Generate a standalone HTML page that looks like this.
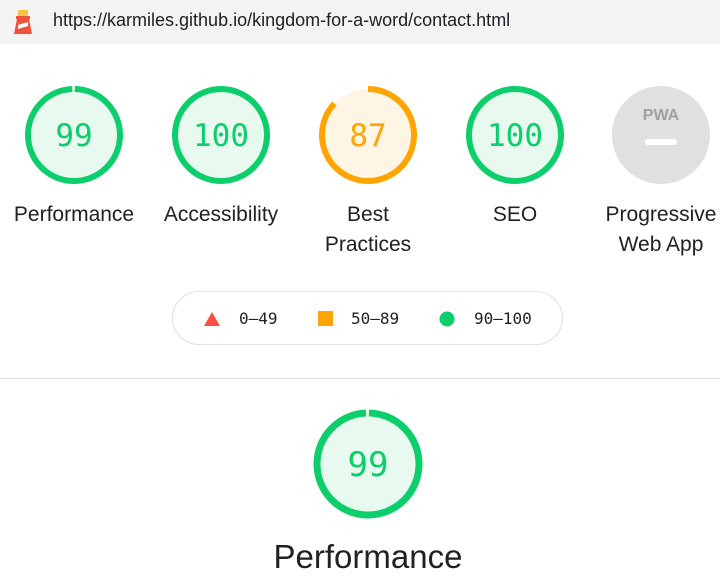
<!DOCTYPE html><html><head><style>
body{margin:0;width:720px;height:581px;background:#fff;position:relative;overflow:hidden;font-family:"Liberation Sans",sans-serif}
.bar{position:absolute;left:0;top:0;width:720px;height:44px;background:#f3f3f3}
.url{position:absolute;left:53px;top:10px;font-size:18px;color:#202124}
.lbl{position:absolute;width:160px;text-align:center;font-size:21px;color:#212121;line-height:30px;top:200px}
.mono{font-family:"DejaVu Sans Mono","Liberation Mono",monospace}
.leg{position:absolute;left:172px;top:291px;width:391px;height:54px;border:1px solid #e0e0e0;border-radius:28px;box-sizing:border-box}
.lt{position:absolute;top:309px;font-size:16px;color:#212121}
</style></head><body>
<div class="bar"></div>
<svg style="position:absolute;left:12px;top:8px" width="22" height="28" viewBox="0 0 22 28"><rect x="6" y="2" width="10" height="6" fill="#f3c34b"/><path d="M4 8h14v3H4z" fill="#f0533a"/><path d="M5 11h12l3 15H2z" fill="#f0533a"/><path d="M6 17l10-3v4l-10 3z" fill="#fff"/></svg>
<div class="url">https://karmiles.github.io/kingdom-for-a-word/contact.html</div>
<svg style="position:absolute;left:0;top:0" width="720" height="581">
<g font-family="DejaVu Sans Mono,Liberation Mono,monospace" font-size="31" text-anchor="middle">
<circle cx="74" cy="135" r="46" fill="#e8f9ef" stroke="#0cce6b" stroke-width="6" stroke-dasharray="286 289" transform="rotate(-89 74 135)"/>
<text x="74" y="146" fill="#0cce6b">99</text>
<circle cx="221" cy="135" r="46" fill="#e8f9ef" stroke="#0cce6b" stroke-width="6"/>
<text x="221" y="146" fill="#0cce6b">100</text>
<circle cx="368" cy="135" r="46" fill="#fff5e5" stroke="#ffa400" stroke-width="6" stroke-dasharray="251 289" transform="rotate(-90 368 135)"/>
<text x="368" y="146" fill="#ffa400">87</text>
<circle cx="515" cy="135" r="46" fill="#e8f9ef" stroke="#0cce6b" stroke-width="6"/>
<text x="515" y="146" fill="#0cce6b">100</text>
<circle cx="661" cy="135" r="49" fill="#e0e0e0"/>
<text x="661" y="120" font-family="Liberation Sans,sans-serif" font-weight="bold" font-size="16" fill="#a0a0a0">PWA</text>
<rect x="645" y="139" width="32" height="6" rx="3" fill="#fff"/>
<circle cx="368" cy="464" r="51" fill="#e8f9ef" stroke="#0cce6b" stroke-width="7" stroke-dasharray="317 320" transform="rotate(-89 368 464)"/>
<text x="368" y="476" fill="#0cce6b" font-size="34">99</text>
</g>
<path d="M212 312l8 14h-16z" fill="#ff4e42"/>
<rect x="318" y="311" width="15" height="15" fill="#ffa400"/>
<circle cx="447" cy="319" r="7.5" fill="#0cce6b"/>
<rect x="0" y="378" width="720" height="1" fill="#e0e0e0"/>
</svg>
<div class="lbl" style="left:-6px">Performance</div>
<div class="lbl" style="left:141px">Accessibility</div>
<div class="lbl" style="left:288px">Best<br>Practices</div>
<div class="lbl" style="left:435px">SEO</div>
<div class="lbl" style="left:581px">Progressive<br>Web App</div>
<div class="leg"></div>
<div class="lt mono" style="left:239px">0–49</div>
<div class="lt mono" style="left:351px">50–89</div>
<div class="lt mono" style="left:474px">90–100</div>
<div style="position:absolute;left:0;width:736px;text-align:center;top:538px;font-size:33px;color:#212121">Performance</div>
</body></html>
